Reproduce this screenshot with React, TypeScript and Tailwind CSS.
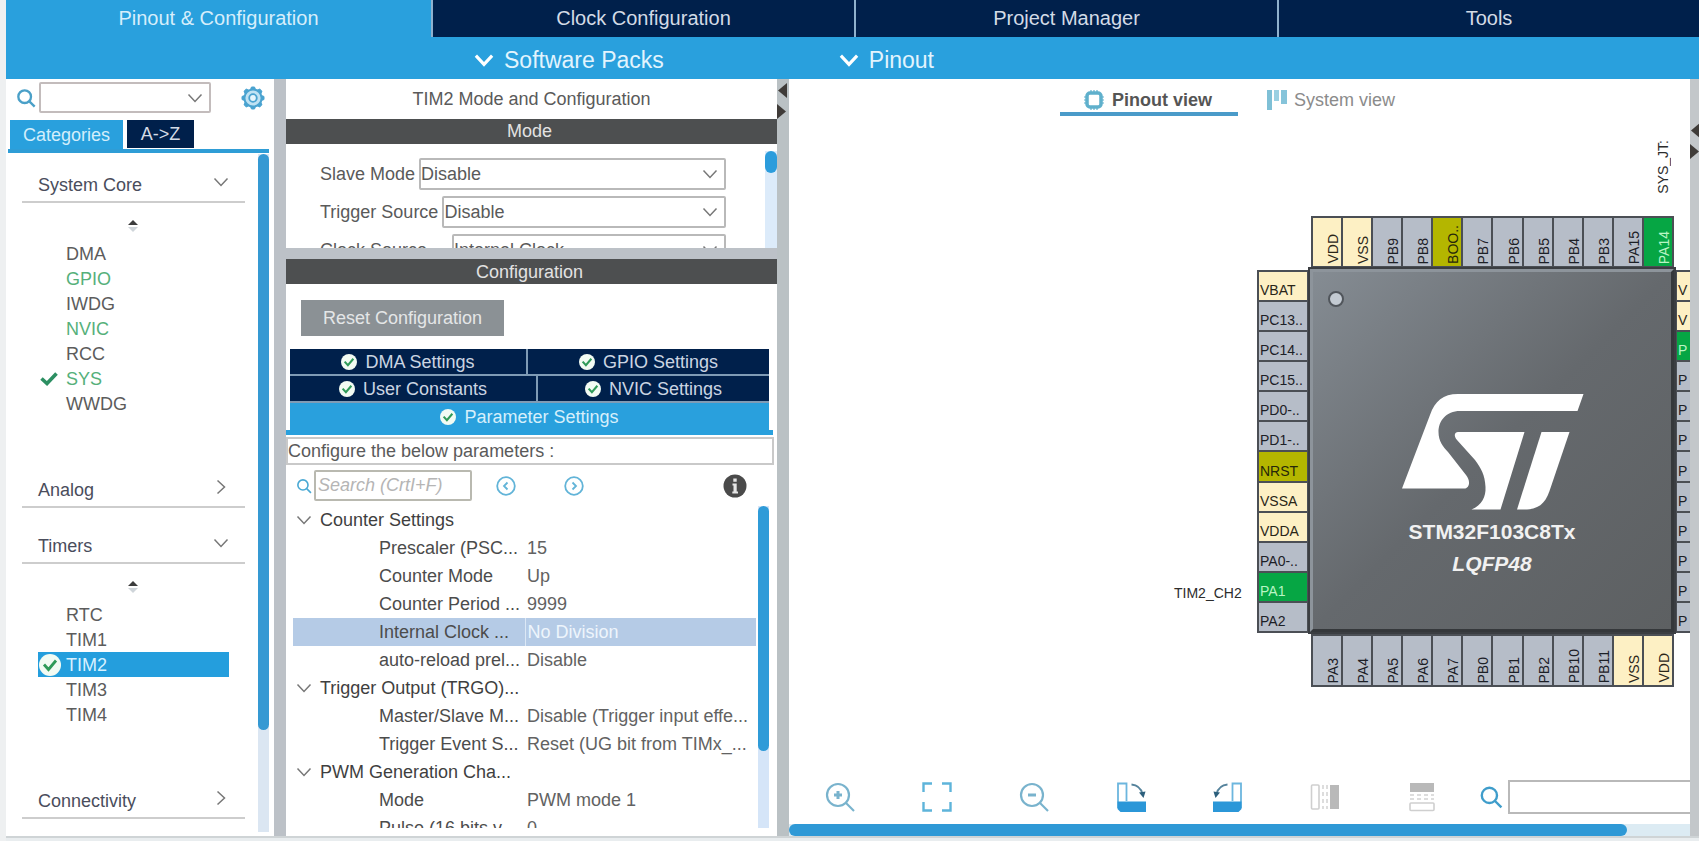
import React from "react";

type Tone = "gray" | "cream" | "olive" | "green";
type PinInfo = { name: string; tone?: Tone };

const TONES: Record<Tone, string> = {
  gray: "bg-[#b6bdc8] text-[#1c2026]",
  cream: "bg-[#fdf0c4] text-[#2a2618]",
  olive: "bg-[#b4b600] text-[#26270a]",
  green: "bg-[#06a644] text-[#b9f5c4]",
};

const TOP_PINS: PinInfo[] = [
  { name: "VDD", tone: "cream" },
  { name: "VSS", tone: "cream" },
  { name: "PB9" },
  { name: "PB8" },
  { name: "BOO..", tone: "olive" },
  { name: "PB7" },
  { name: "PB6" },
  { name: "PB5" },
  { name: "PB4" },
  { name: "PB3" },
  { name: "PA15" },
  { name: "PA14", tone: "green" },
];

const LEFT_PINS: PinInfo[] = [
  { name: "VBAT", tone: "cream" },
  { name: "PC13.." },
  { name: "PC14.." },
  { name: "PC15.." },
  { name: "PD0-.." },
  { name: "PD1-.." },
  { name: "NRST", tone: "olive" },
  { name: "VSSA", tone: "cream" },
  { name: "VDDA", tone: "cream" },
  { name: "PA0-.." },
  { name: "PA1", tone: "green" },
  { name: "PA2" },
];

const RIGHT_PINS: PinInfo[] = [
  { name: "V", tone: "cream" },
  { name: "V", tone: "cream" },
  { name: "P", tone: "green" },
  { name: "P" },
  { name: "P" },
  { name: "P" },
  { name: "P" },
  { name: "P" },
  { name: "P" },
  { name: "P" },
  { name: "P" },
  { name: "P" },
];

const BOTTOM_PINS: PinInfo[] = [
  { name: "PA3" },
  { name: "PA4" },
  { name: "PA5" },
  { name: "PA6" },
  { name: "PA7" },
  { name: "PB0" },
  { name: "PB1" },
  { name: "PB2" },
  { name: "PB10" },
  { name: "PB11" },
  { name: "VSS", tone: "cream" },
  { name: "VDD", tone: "cream" },
];

type Row = { group?: string; label?: string; value?: string; selected?: boolean };

const ROWS: Row[] = [
  { group: "Counter Settings" },
  { label: "Prescaler (PSC...", value: "15" },
  { label: "Counter Mode", value: "Up" },
  { label: "Counter Period ...", value: "9999" },
  { label: "Internal Clock ...", value: "No Division", selected: true },
  { label: "auto-reload prel...", value: "Disable" },
  { group: "Trigger Output (TRGO)..." },
  { label: "Master/Slave M...", value: "Disable (Trigger input effe..." },
  { label: "Trigger Event S...", value: "Reset (UG bit from TIMx_..." },
  { group: "PWM Generation Cha..." },
  { label: "Mode", value: "PWM mode 1" },
  { label: "Pulse (16 bits v...", value: "0" },
];

function Chevron({ dir = "down", className = "" }: { dir?: "down" | "right"; className?: string }) {
  return (
    <svg viewBox="0 0 16 16" className={className} fill="none" stroke="currentColor" aria-hidden="true">
      <path d={dir === "down" ? "M1.5 4.5 8 11.5 14.5 4.5" : "M4.5 1.5 11.5 8 4.5 14.5"} />
    </svg>
  );
}

function Magnifier({ className, sign }: { className: string; sign?: "+" | "-" }) {
  return (
    <svg viewBox="0 0 30 30" className={className} fill="none" stroke="currentColor" aria-hidden="true">
      <circle cx="13" cy="13" r={sign ? 11 : 9.5} />
      <path d={sign ? "M21 21 29 29" : "M20 20 28 28"} />
      {sign && <path d="M9 13h8" strokeWidth="3" />}
      {sign === "+" && <path d="M13 9v8" strokeWidth="3" />}
    </svg>
  );
}

function Gear() {
  const teeth = Array.from({ length: 8 }, (_, i) => i * 45);
  return (
    <svg viewBox="0 0 24 24" className="size-6 text-[#4aa3d0]" fill="none" stroke="currentColor" aria-hidden="true">
      {teeth.map((a) => (
        <path key={a} d="M9.500 3.500 10.500 1h3l1 2.500" fill="currentColor" strokeWidth="1" transform={`rotate(${a} 12 12)`} />
      ))}
      <circle cx="12" cy="12" r="8.6" strokeWidth="2" fill="#bfe2f3" />
      <circle cx="12" cy="12" r="3.8" strokeWidth="1.8" fill="#e6f5fc" />
    </svg>
  );
}

function CheckBadge({ className }: { className: string }) {
  return (
    <svg viewBox="0 0 22 22" className={className} aria-hidden="true">
      <circle cx="11" cy="11" r="11" fill="#f2fbf3" />
      <path d="M5 10.5 9.5 15.5 17 6.5" fill="none" stroke="#2f9a58" strokeWidth="2.8" />
    </svg>
  );
}

function Sorter() {
  return (
    <svg viewBox="0 0 12 14" className="h-3.5 w-3" aria-hidden="true">
      <path d="M1 6 6 1l5 5z" fill="#3c3c3c" />
      <path d="M1 8h10l-5 5z" fill="#cfd5da" />
    </svg>
  );
}

function Section({ title, open, items }: {
  title: string;
  open?: boolean;
  items?: { name: string; state?: "on" | "green" | "selected" }[];
}) {
  return (
    <section>
      <button
        aria-expanded={!!open}
        className="ml-3.5 flex h-[50px] w-[223px] items-center justify-between border-b-2 border-[#cdcdcd] pt-4 pr-4 pl-4 text-left text-[#4a4d5c]"
      >
        <span>{title}</span>
        <Chevron dir={open ? "down" : "right"} className="mb-1.5 size-4 stroke-[1.5] text-[#777]" />
      </button>
      {items && (
        <div className="pb-[36px]">
          <div className="flex h-[38px] items-center pt-2 pl-[119px]">
            <Sorter />
          </div>
          <ul className="ml-[30px] w-[191px]">
            {items.map((it) => (
              <li key={it.name}>
                <button
                  className={
                    "flex h-[25px] w-full items-center text-left " +
                    (it.state === "selected"
                      ? "bg-[#249edd] text-[#d8f1ff]"
                      : it.state
                        ? "text-[#55b07a]"
                        : "text-[#5c5c5c]")
                  }
                >
                  <span className="flex w-[28px] items-center">
                    {it.state === "selected" && <CheckBadge className="ml-px size-[22px]" />}
                    {it.state === "on" && (
                      <svg viewBox="0 0 18 14" className="ml-0.5 h-3.5 w-[18px]" fill="none" stroke="#2c8f62" strokeWidth="3.6" aria-hidden="true">
                        <path d="M1.5 6.5 7 11.5 16.5 1.5" />
                      </svg>
                    )}
                  </span>
                  {it.name}
                </button>
              </li>
            ))}
          </ul>
        </div>
      )}
    </section>
  );
}

function ModeField({ id, label, value, wide }: { id: string; label: string; value: string; wide?: boolean }) {
  return (
    <div className="flex h-8 w-[406px] shrink-0 items-center gap-1">
      <label htmlFor={id} className={wide ? "w-32 whitespace-nowrap" : "whitespace-nowrap"}>{label}</label>
      <div className="relative h-full flex-1">
        <select id={id} className="h-full w-full appearance-none rounded-xs border-2 border-[#b9b9b9] bg-white">
          <option>{value}</option>
        </select>
        <Chevron className="pointer-events-none absolute top-2 right-2 size-4 stroke-[1.5] text-[#777]" />
      </div>
    </div>
  );
}

function SettingsTab({ label, className }: { label: string; className: string }) {
  return (
    <button role="tab" className={"flex items-center justify-center gap-2 " + className}>
      <CheckBadge className="size-4" />
      {label}
    </button>
  );
}

function SplitArrows() {
  return (
    <svg viewBox="0 0 10 40" className="h-10 w-2.5" fill="#3f3b38" aria-hidden="true">
      <path d="M10 4v15L1 11.5z" />
      <path d="M0 25v15l9-7.500z" />
    </svg>
  );
}

function VerticalPin({ pin }: { pin: PinInfo }) {
  return (
    <div className={"flex min-w-0 flex-1 items-end justify-end overflow-hidden border-2 border-r-0 border-[#4b4f55] pb-0.5 last:border-r-2 " + TONES[pin.tone ?? "gray"]}>
      <span className="rotate-180 whitespace-nowrap leading-4 [writing-mode:vertical-rl]">{pin.name}</span>
    </div>
  );
}

function HorizontalPin({ pin }: { pin: PinInfo }) {
  return (
    <div className={"flex min-h-0 flex-1 items-end overflow-hidden border-2 border-b-0 border-[#4b4f55] pb-0.5 pl-px last:border-b-2 " + TONES[pin.tone ?? "gray"]}>
      <span className="whitespace-nowrap leading-4">{pin.name}</span>
    </div>
  );
}

function RotateIcon({ flip }: { flip?: boolean }) {
  return (
    <svg viewBox="0 0 30 30" className="size-[30px]" aria-hidden="true">
      <g transform={flip ? "translate(30 0) scale(-1 1)" : undefined}>
        <path d="M2 26V1.500h8.500V19" fill="none" stroke="#6cb6de" strokeWidth="1.800" />
        <path d="M1.500 19.500H30V30H4.500L1.500 27z" fill="#2b97d8" />
        <path d="M15.500 2.500C21 3 25 6.500 26.500 12" fill="none" stroke="#55839c" strokeWidth="1.800" />
        <path d="M23 10.500 29.500 9.500 27.500 16z" fill="#2c5f7c" />
      </g>
    </svg>
  );
}

function MirrorIcon({ vertical }: { vertical?: boolean }) {
  return (
    <svg viewBox="0 0 30 30" className="size-[30px]" aria-hidden="true">
      <g transform={vertical ? "rotate(-90 15 15)" : undefined}>
        <rect x="1.500" y="3" width="7.500" height="24" rx="1" fill="none" stroke="#cfcfcf" strokeWidth="1.600" />
        <path d="M13 3v24M17 3v24" stroke="#d2d2d2" strokeWidth="1.500" strokeDasharray="4 3" />
        <path d="M20 3h9v24h-9z" fill="#b9b9b9" />
      </g>
    </svg>
  );
}

function StLogo() {
  return (
    <svg viewBox="0 0 182 117" className="ml-0.5 h-[117px] w-[182px]" fill="#fff" aria-label="ST" role="img">
      <path d="M0 95.500 28 22C33 8 41 1 56 1H181.500L175.500 18H58C44 18 36.500 28 36.500 39 36.500 48 41 54 46 59L64 82C69 88 67.500 95.500 62 95.500Z" />
      <path d="M56 39H122.500L98.500 116.500H69.500C80 112 84 104 83.500 94 83 82 79 75 73 67L55 47C51.500 43 52.500 39 56 39Z" />
      <path d="M139.500 39H167.500L147.500 98C143 111 136 116.500 122 116.500H115Z" />
    </svg>
  );
}

function Chip() {
  return (
    <div className="absolute top-[100px] left-[468px] grid grid-cols-[52px_366px_52px] grid-rows-[52px_365px_54px] text-[14px]">
      <div className="col-start-2 row-start-1 flex pr-px pl-0.5">
        {TOP_PINS.map((p) => <VerticalPin key={p.name} pin={p} />)}
      </div>
      <div className="col-start-1 row-start-2 flex flex-col pt-0.5">
        {LEFT_PINS.map((p) => <HorizontalPin key={p.name} pin={p} />)}
      </div>
      <div className="relative col-start-2 row-start-2 flex flex-col items-center border-4 border-t-[#8d949b] border-r-[#35383b] border-b-[#35383b] border-l-[#8d949b] bg-linear-to-br from-[#858c93] via-[#65696d] to-[#5d6062] pt-[121px] font-bold text-[#f1f1f1] outline-2 -outline-offset-1 outline-[#3b3e42]">
        <span className="absolute top-[19px] left-[15px] size-4 rounded-full border-2 border-[#50555b] bg-[#c3cad2]" />
        <StLogo />
        <div className="mt-2.5 text-[21px] leading-6">STM32F103C8Tx</div>
        <div className="mt-2 text-[21px] italic leading-6">LQFP48</div>
      </div>
      <div className="col-start-3 row-start-2 flex flex-col pt-0.5">
        {RIGHT_PINS.map((p, i) => <HorizontalPin key={i} pin={p} />)}
      </div>
      <div className="col-start-2 row-start-3 flex pt-px pr-px pl-0.5">
        {BOTTOM_PINS.map((p) => <VerticalPin key={p.name} pin={p} />)}
      </div>
    </div>
  );
}

export default function App() {
  return (
    <div className="flex h-screen flex-col overflow-hidden bg-[#eef0f1] pl-1.5 font-['Liberation_Sans',Arial,sans-serif] text-[18px] leading-6 text-[#5a5a5a]">
      <nav className="grid h-[37px] shrink-0 grid-cols-[425fr_421fr_421fr_420fr] gap-0.5 bg-[#8fb1cd] text-[20px] text-[#d3dbe6]">
        <button className="bg-[#29a0dd] pb-0.5 text-[#d6eefb]">Pinout &amp; Configuration</button>
        <button className="bg-[#00204b] pb-0.5">Clock Configuration</button>
        <button className="bg-[#00204b] pb-0.5">Project Manager</button>
        <button className="bg-[#00204b] pb-0.5">Tools</button>
      </nav>
      <div className="flex h-[42px] shrink-0 items-center gap-[175px] bg-[#29a0dd] pt-1 pl-[468px] text-[23px] text-[#e2f4fd]">
        <button className="flex items-center gap-2.5">
          <Chevron className="size-5 stroke-[2.5] text-white" />
          Software Packs
        </button>
        <button className="flex items-center gap-2.5">
          <Chevron className="size-5 stroke-[2.5] text-white" />
          Pinout
        </button>
      </div>

      <main className="flex min-h-0 flex-1 bg-white">
        <aside className="flex w-[268px] shrink-0 flex-col bg-white pl-0.5">
          <div className="flex h-[41px] shrink-0 items-center pb-1 pl-2">
            <Magnifier className="size-5 stroke-[3.5] text-[#4aa0c8]" />
            <div className="relative ml-[3px] h-[31px] w-[172px]">
              <select aria-label="Find peripheral" className="h-full w-full appearance-none rounded-xs border-2 border-[#c3bcbc] bg-white" />
              <Chevron className="pointer-events-none absolute top-2 right-2 size-4 stroke-[1.5] text-[#777]" />
            </div>
            <button aria-label="Options" className="ml-[30px]"><Gear /></button>
          </div>
          <div role="tablist" className="mr-[5px] flex h-[33px] shrink-0 gap-1 border-b-4 border-[#2f9dd6] pl-0.5">
            <button role="tab" className="w-[113px] bg-[#29a0dd] text-[#d3eefb]">Categories</button>
            <button role="tab" className="mb-px w-[67px] bg-[#00204b] text-[#d3dbe6]">A-&gt;Z</button>
          </div>
          <div className="flex min-h-0 flex-1 overflow-hidden">
            <div className="flex flex-1 flex-col gap-[6px]">
              <Section
                title="System Core"
                open
                items={[
                  { name: "DMA" },
                  { name: "GPIO", state: "green" },
                  { name: "IWDG" },
                  { name: "NVIC", state: "green" },
                  { name: "RCC" },
                  { name: "SYS", state: "on" },
                  { name: "WWDG" },
                ]}
              />
              <Section title="Analog" />
              <Section
                title="Timers"
                open
                items={[
                  { name: "RTC" },
                  { name: "TIM1" },
                  { name: "TIM2", state: "selected" },
                  { name: "TIM3" },
                  { name: "TIM4" },
                ]}
              />
              <Section title="Connectivity" />
            </div>
            <div className="mt-px mr-[5px] mb-1 w-[11px] bg-[#dbe6f2]">
              <div className="h-[85%] rounded-full bg-[#3599d3]" />
            </div>
          </div>
        </aside>

        <div className="w-3 shrink-0 bg-[#bcc1c7]" />

        <section className="flex w-[491px] shrink-0 flex-col bg-white">
          <h1 className="h-10 shrink-0 pt-2 text-center">TIM2 Mode and Configuration</h1>
          <h2 className="h-[25px] shrink-0 bg-[#4d4f50] pr-1 text-center text-[#e2e2e2]">Mode</h2>
          <div className="flex h-[104px] shrink-0 overflow-hidden">
            <div className="flex flex-1 flex-col gap-[6px] pt-3.5 pl-[34px]">
              <ModeField id="slave-mode" label="Slave Mode" value="Disable" />
              <ModeField id="trigger-source" label="Trigger Source" value="Disable" />
              <ModeField id="clock-source" label="Clock Source" value="Internal Clock" wide />
            </div>
            <div className="mt-[7px] w-3 bg-[#dcebfa]">
              <div className="h-[22px] rounded-full bg-[#2b9cdc]" />
            </div>
          </div>
          <div className="h-[11px] shrink-0 bg-[#bcc1c7]" />
          <h2 className="h-[25px] shrink-0 bg-[#4d4f50] pt-px pr-1 text-center text-[#e2e2e2]">Configuration</h2>
          <div className="shrink-0 pt-4 pb-[13px] pl-[15px]">
            <button className="h-9 w-[203px] bg-[#8b9195] text-[#e4e6e7]">Reset Configuration</button>
          </div>
          <div role="tablist" className="mr-2 ml-1 flex shrink-0 flex-col gap-0.5 bg-[#7f9bb5] text-[#cbd5e2]">
            <div className="flex h-[25px] gap-0.5">
              <SettingsTab label="DMA Settings" className="flex-[236] bg-[#00204b]" />
              <SettingsTab label="GPIO Settings" className="flex-[241] bg-[#00204b]" />
            </div>
            <div className="flex h-[25px] gap-0.5">
              <SettingsTab label="User Constants" className="flex-[246] bg-[#00204b]" />
              <SettingsTab label="NVIC Settings" className="flex-[231] bg-[#00204b]" />
            </div>
            <SettingsTab label="Parameter Settings" className="h-[27px] bg-[#29a0dd] text-[#d6effb]" />
          </div>
          <div className="mr-1 h-[5px] shrink-0 bg-[#29a0dd]" />
          <div className="mt-0.5 mr-[3px] h-7 shrink-0 border-2 border-[#c9c9c9]">Configure the below parameters :</div>
          <div className="flex h-[41px] shrink-0 items-center pl-2.5">
            <Magnifier className="size-4 stroke-[3] text-[#4aa9d4]" />
            <input
              aria-label="Search parameters"
              placeholder="Search (CrtI+F)"
              className="ml-0.5 h-[31px] w-[158px] rounded-xs border-2 border-[#b9b9b0] bg-white pl-0.5 italic placeholder:text-[#b5b5b5]"
            />
            <button aria-label="Previous" className="ml-6">
              <svg viewBox="0 0 20 20" className="size-5" fill="none" stroke="#62b4d8" strokeWidth="1.800" aria-hidden="true">
                <circle cx="10" cy="10" r="8.800" />
                <path d="M11.500 6.500 8 10l3.500 3.500" />
              </svg>
            </button>
            <button aria-label="Next" className="ml-12">
              <svg viewBox="0 0 20 20" className="size-5" fill="none" stroke="#62b4d8" strokeWidth="1.800" aria-hidden="true">
                <circle cx="10" cy="10" r="8.800" />
                <path d="M8.500 6.500 12 10l-3.500 3.500" />
              </svg>
            </button>
            <button aria-label="Information" className="mr-[30px] ml-auto">
              <svg viewBox="0 0 24 24" className="size-6" aria-hidden="true">
                <circle cx="12" cy="12" r="11.500" fill="#4a4a4a" />
                <path d="M10.300 4.500h3.400v3.200h-3.400zM9.500 9.500h4.200v8h1.300v2H9.300v-2h1.200v-6h-1z" fill="#e6e6e6" />
              </svg>
            </button>
          </div>
          <div className="mb-2 flex min-h-0 flex-1 overflow-hidden pl-[7px]">
            <div className="min-w-0 flex-1 overflow-hidden">
              <table className="w-full table-fixed border-collapse">
                <colgroup>
                  <col className="w-[232px]" />
                  <col />
                </colgroup>
                <tbody>
                  {ROWS.map((r) =>
                    r.group ? (
                      <tr key={r.group} className="h-7 text-[#3f3f3f]">
                        <th colSpan={2} scope="rowgroup" className="p-0 text-left font-normal">
                          <span className="flex items-center gap-2 pl-[3px]">
                            <Chevron className="size-4 stroke-[1.5] text-[#777]" />
                            {r.group}
                          </span>
                        </th>
                      </tr>
                    ) : (
                      <tr key={r.label} className={r.selected ? "h-7 bg-[#b5cbe6]" : "h-7"}>
                        <th scope="row" className="p-0 pl-[86px] text-left font-normal whitespace-nowrap text-[#4c4c4c]">{r.label}</th>
                        <td className={"p-0 pl-0.5 whitespace-nowrap " + (r.selected ? "border-l border-[#dce8f5] text-[#eef5fc]" : "text-[#626262]")}>
                          {r.value}
                        </td>
                      </tr>
                    ),
                  )}
                </tbody>
              </table>
            </div>
            <div className="mr-2 ml-0.5 w-[11px] shrink-0 bg-[#d5e5f8]">
              <div className="h-[76%] rounded-full bg-[#2f9bd8]" />
            </div>
          </div>
        </section>

        <div className="w-3 shrink-0 bg-[#bac1c4]"><SplitArrows /></div>

        <section className="flex min-w-0 flex-1 flex-col bg-white">
          <div role="tablist" className="flex h-[37px] shrink-0 gap-[29px] pl-[271px]">
            <button role="tab" className="flex w-[178px] items-center gap-2 border-b-4 border-[#4a9bc9] pt-2 pl-6 font-bold text-[#555]">
              <svg viewBox="0 0 20 20" className="size-5" fill="none" stroke="#5fb0cc" aria-hidden="true">
                <rect x="3" y="3" width="14" height="14" rx="3" strokeWidth="3.500" />
                <path d="M7 0v3M10 0v3M13 0v3M7 17v3M10 17v3M13 17v3M0 7h3M0 10h3M0 13h3M17 7h3M17 10h3M17 13h3" strokeWidth="1.200" />
              </svg>
              Pinout view
            </button>
            <button role="tab" className="flex items-center gap-[7px] pt-1 text-[#8b8b8b]">
              <svg viewBox="0 0 20 20" className="size-5" aria-hidden="true">
                <path d="M0 0h5v20H0z" fill="#7fc0d6" />
                <path d="M7 0h5v11H7z" fill="#9bd0e2" />
                <path d="M14 0h6v14h-6z" fill="#86c4da" />
              </svg>
              System view
            </button>
          </div>
          <div className="relative min-h-0 flex-1 overflow-hidden">
            <Chip />
            <span className="absolute top-[469px] left-[385px] text-[14px] leading-4 text-[#2c2c2c]">TIM2_CH2</span>
            <span className="absolute top-[24px] left-[866px] rotate-180 text-[14px] leading-4 text-[#2c2c2c] [writing-mode:vertical-rl]">SYS_JT:</span>
          </div>
          <div className="flex h-[46px] shrink-0 items-center pb-2 pl-9">
            <div className="flex shrink-0 gap-[67px] text-[#79b3cd]">
              <button aria-label="Zoom in"><Magnifier sign="+" className="size-[30px] stroke-[2.2]" /></button>
              <button aria-label="Fit to window">
                <svg viewBox="0 0 30 30" className="size-[30px]" fill="none" stroke="#5eb4da" strokeWidth="2.400" aria-hidden="true">
                  <path d="M1.500 10V1.500H10M20 1.500h8.500V10M28.500 20v8.500H20M10 28.500H1.500V20" />
                </svg>
              </button>
              <button aria-label="Zoom out"><Magnifier sign="-" className="size-[30px] stroke-[2.2]" /></button>
              <button aria-label="Rotate clockwise"><RotateIcon /></button>
              <button aria-label="Rotate counterclockwise"><RotateIcon flip /></button>
              <button aria-label="Flip horizontally"><MirrorIcon /></button>
              <button aria-label="Flip vertically"><MirrorIcon vertical /></button>
            </div>
            <Magnifier className="mr-[5px] ml-[42px] size-6 shrink-0 stroke-[3] text-[#3f9dcb]" />
            <input aria-label="Find pin" className="h-[34px] min-w-0 flex-1 border-2 border-r-0 border-[#b9b9b9] bg-white" />
          </div>
          <div className="h-3 shrink-0 bg-[#dcebf3]">
            <div className="h-full w-[93%] rounded-full bg-[#2f99d6]" />
          </div>
        </section>

        <div className="w-[9px] shrink-0 overflow-hidden bg-[#c3c7ca] pt-10"><SplitArrows /></div>
      </main>
      <div className="h-[5px] shrink-0 border-t-2 border-[#cfd4d6] bg-[#e9edef]" />
    </div>
  );
}
